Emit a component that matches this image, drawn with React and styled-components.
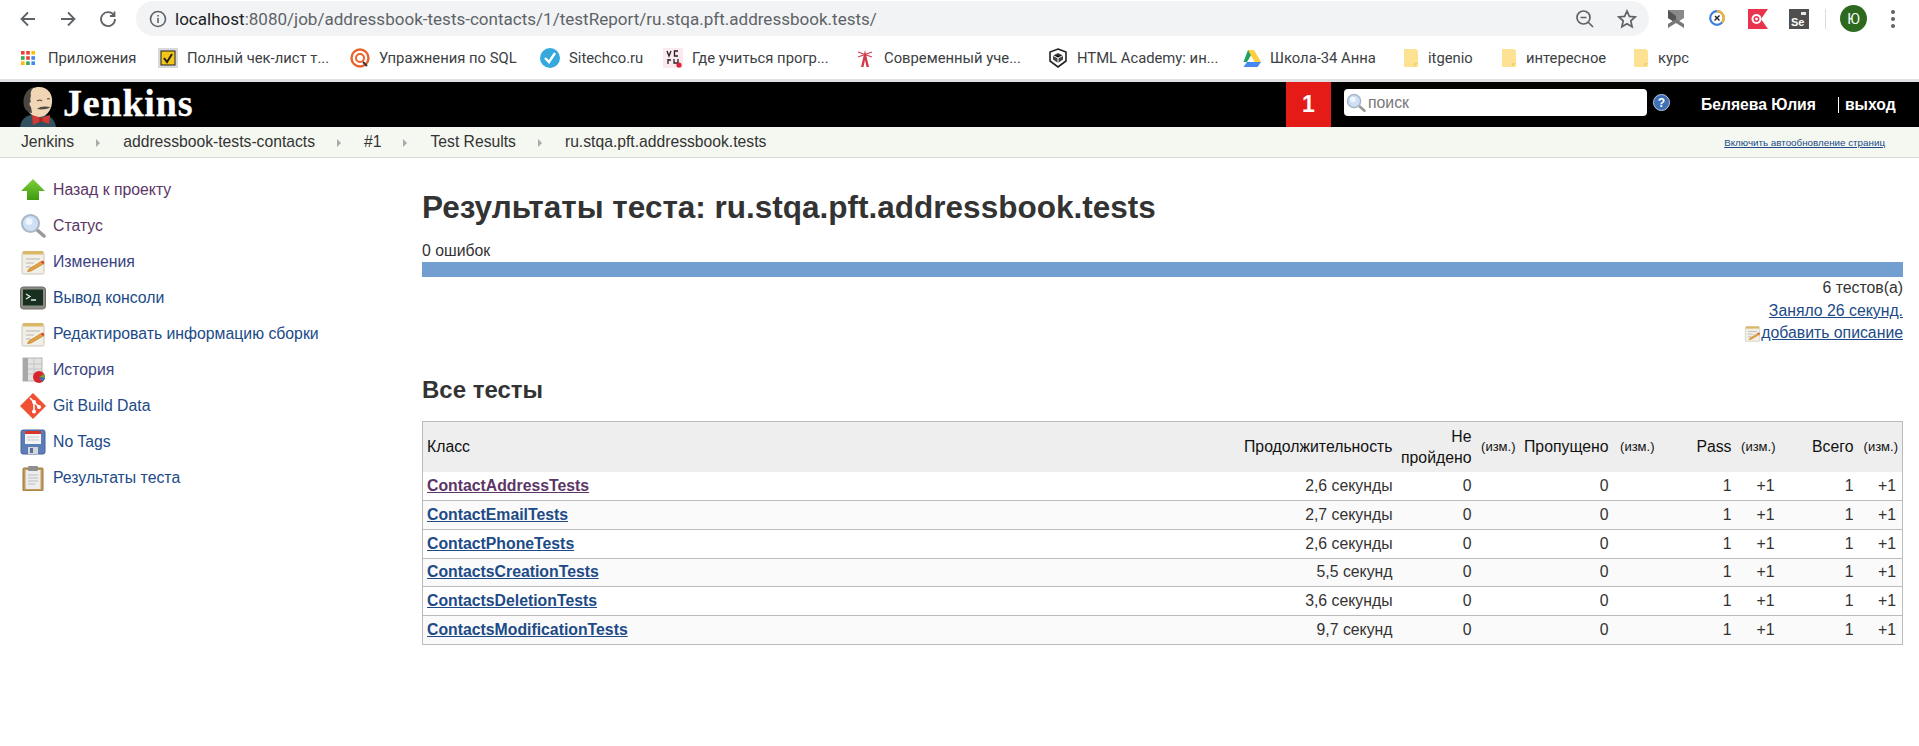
import React from 'react'
import styled, { createGlobalStyle } from 'styled-components'

const GlobalStyle = createGlobalStyle`
  html, body {
    margin: 0;
    padding: 0;
    background: #fff;
    font-family: 'Liberation Sans', Arial, sans-serif;
    color: #333;
  }
  * { box-sizing: border-box; }
`

const Page = styled.div`
  width: 1919px;
  height: 746px;
  overflow: hidden;
  background: #fff;
`

/* browser chrome */
const Toolbar = styled.div`
  display: flex;
  align-items: center;
  height: 37px;
  padding: 0 0 0 18px;
`
const NavIcon = styled.svg`
  width: 20px;
  height: 20px;
  flex: none;
  margin-right: 20px;
  fill: none;
  stroke: #5f6368;
  stroke-width: 1.8;
`
const Omnibox = styled.div`
  display: flex;
  align-items: center;
  flex: none;
  width: 1513px;
  height: 35px;
  margin-left: -2px;
  padding: 0 12px 0 13px;
  border-radius: 18px;
  background: #f1f3f4;
  font-family: 'Roboto', sans-serif;
  font-size: 17.05px;
  color: #5f6368;
`
const UrlHost = styled.span`
  color: #202124;
  margin-left: 8px;
`
const Fill = styled.div`
  flex-grow: 1;
`
const OmniIcon = styled.svg`
  width: 20px;
  height: 20px;
  margin-left: 22px;
  fill: none;
  stroke: #5f6368;
  stroke-width: 1.7;
`
const Extensions = styled.div`
  display: flex;
  align-items: center;
  flex-grow: 1;
  padding-left: 17px;
  gap: 21px;
`
const ExtIcon = styled.svg`
  width: 20px;
  height: 20px;
  flex: none;
`
const Separator = styled.div`
  width: 1px;
  height: 20px;
  background: #dadce0;
  margin-left: -5px;
`
const Avatar = styled.div`
  display: flex;
  align-items: center;
  justify-content: center;
  flex: none;
  width: 27px;
  height: 27px;
  margin-left: -7px;
  border-radius: 50%;
  background: #2d6a1f;
  color: #fff;
  font-family: 'Roboto', sans-serif;
  font-size: 14px;
`
const Dots = styled.div`
  display: flex;
  flex-flow: column;
  gap: 3px;
  margin-left: 3px;
  i {
    display: block;
    width: 4px;
    height: 4px;
    border-radius: 50%;
    background: #5f6368;
  }
`
const Bookmarks = styled.div`
  display: flex;
  align-items: center;
  height: 45px;
  padding: 0 0 0 20px;
  border-bottom: 3px solid #dfe1e5;
  font-family: 'Roboto', sans-serif;
  font-size: 14.8px;
  color: #3c4043;
`
const Bookmark = styled.div`
  display: flex;
  align-items: center;
  width: ${(p) => p.$w}px;
  flex: none;
  white-space: nowrap;
  gap: ${(p) => p.$gap || 9}px;
  svg { flex: none; }
`

/* jenkins header */
const Header = styled.div`
  display: flex;
  align-items: stretch;
  height: 45px;
  background: #000;
`
const Logo = styled.div`
  display: flex;
  align-items: flex-end;
  flex: none;
  width: 1286px;
  padding-left: 17px;
  overflow: hidden;
`
const LogoText = styled.span`
  align-self: center;
  margin-top: -3px;
  color: #fff;
  font-family: 'Liberation Serif', serif;
  font-weight: 700;
  font-size: 38px;
  letter-spacing: 0.8px;
  -webkit-text-stroke: 0.3px #fff;
`
const Badge = styled.div`
  display: flex;
  align-items: center;
  justify-content: center;
  flex: none;
  width: 45px;
  background: #e41b17;
  color: #fff;
  font-weight: 700;
  font-size: 23px;
`
const Search = styled.div`
  display: flex;
  align-items: center;
  flex: none;
  width: 303px;
  height: 27px;
  margin: 7px 0 0 13px;
  padding-left: 2px;
  border-radius: 4px;
  background: #fff;
  color: #777;
  font-size: 15.8px;
  gap: 2px;
`
const Help = styled.div`
  display: flex;
  align-items: center;
  justify-content: center;
  flex: none;
  width: 17px;
  height: 17px;
  margin: 12px 0 0 6px;
  border-radius: 50%;
  background: #3f6fb5;
  border: 1px solid #b9cbe6;
  color: #fff;
  font-size: 12px;
  font-weight: 700;
`
const UserName = styled.div`
  display: flex;
  align-items: center;
  margin-left: 31px;
  color: #fff;
  font-weight: 700;
  font-size: 15.7px;
  white-space: nowrap;
`
const Logout = styled(UserName)`
  margin-left: 22px;
  span {
    border-left: 1px solid #fff;
    padding-left: 6px;
    line-height: 16px;
  }
`

/* breadcrumbs */
const Crumbs = styled.div`
  display: flex;
  align-items: center;
  height: 31px;
  padding: 0 34px 0 21px;
  background: #f5f8f1;
  border-bottom: 1px solid #d8d8d8;
  font-size: 15.7px;
  color: #333;
`
const Arrow = styled.span`
  width: 0;
  height: 0;
  margin: 1px 23px 0 22px;
  border-left: 4px solid #aaa;
  border-top: 4px solid transparent;
  border-bottom: 4px solid transparent;
`
const AutoRefresh = styled.a`
  margin-left: auto;
  font-size: 9.8px;
  color: #204a87;
  text-decoration: underline;
`

const Main = styled.div`
  display: flex;
  align-items: flex-start;
`

/* side panel */
const Side = styled.div`
  flex: none;
  width: 422px;
  padding: 14px 0 0 20px;
`
const taskColors = { visited: '#5c3566', mixed: '#3a3f80', link: '#204a87' }
const TaskRow = styled.div`
  display: flex;
  align-items: center;
  height: 36px;
  font-size: 15.8px;
  color: ${(p) => taskColors[p.$tone || 'link']};
  gap: 7px;
`
const TaskIcon = styled.svg`
  width: 26px;
  height: 26px;
  flex: none;
`

/* content */
const Content = styled.div`
  flex: none;
  width: 1481px;
  font-size: 15.8px;
`
const Title = styled.h1`
  margin: 30px 0 0;
  font-size: 31.5px;
  line-height: 38px;
  font-weight: 700;
  color: #333;
`
const ErrorCount = styled.div`
  margin-top: 14px;
  padding-bottom: 1px;
  line-height: 21px;
`
const ProgressBar = styled.div`
  height: 15px;
  background: #729fcf;
`
const Summary = styled.div`
  display: flex;
  flex-flow: column;
  align-items: flex-end;
`
const SummaryLine = styled.div`
  display: flex;
  align-items: center;
  height: 22.5px;
`
const Link = styled.a`
  color: #204a87;
  text-decoration: underline;
`
const Section = styled.h2`
  margin: 31px 0 0;
  font-size: 24px;
  line-height: 28px;
  font-weight: 700;
  color: #333;
`
const Table = styled.table`
  width: 100%;
  margin-top: 17px;
  border-collapse: collapse;
  table-layout: fixed;
  border: 1px solid #bbb;
`
const HeadCell = styled.th`
  height: 51px;
  padding: 0 4px;
  background: #eee;
  font-weight: 400;
  font-size: ${(p) => (p.$small ? '13px' : '15.8px')};
  line-height: 21px;
  color: #111;
  text-align: ${(p) => (p.$left ? 'left' : 'right')};
`
const Row = styled.tr`
  background: ${(p) => (p.$odd ? '#fafafa' : '#fff')};
  border-bottom: 1px solid #bbb;
`
const Cell = styled.td`
  height: 28.7px;
  padding: 0 ${(p) => p.$pr || 4}px 0 4px;
  text-align: right;
  color: #333;
`
const ClassCell = styled.td`
  padding: 0 4px;
  font-weight: 700;
  a {
    color: ${(p) => (p.$visited ? '#5c3566' : '#204a87')};
    text-decoration: underline;
  }
`

function Magnifier({ size = 26 }) {
  return (
    <svg width={size} height={size} viewBox="0 0 26 26">
      <line x1="16" y1="16" x2="24" y2="23" stroke="#999" strokeWidth="3.5" strokeLinecap="round" />
      <circle cx="10.5" cy="10.5" r="8.5" fill="#cfe0f5" stroke="#a9b8c9" strokeWidth="2" />
      <circle cx="9" cy="8.5" r="3.5" fill="#f0f6ff" />
    </svg>
  )
}

function Notepad({ small }) {
  return (
    <>
      <rect x="2" y="3" width="22" height="22" rx="1.5" fill="#f1efe6" stroke="#c9c6b8" />
      <rect x="3" y="2" width="20" height="3.5" fill="#d9b867" />
      <path d="M6 10h14M6 14h8M6 18h5" stroke="#b5b5b0" strokeWidth="1.2" />
      <path d="M9 20l13-8 2 2.5-13 7.5-3.5.6z" fill="#e8a33d" stroke="#a86e1e" strokeWidth={small ? 0.4 : 0.6} />
      <path d="M21 12.6l2-1.2 1.4 2.3-2 1.2z" fill="#d8423a" />
    </>
  )
}

function TaskGlyph({ kind }) {
  switch (kind) {
    case 'up':
      return (
        <TaskIcon viewBox="0 0 26 26">
          <defs>
            <linearGradient id="upFill" x1="0" y1="0" x2="0" y2="1">
              <stop offset="0" stopColor="#7fcf3a" />
              <stop offset="1" stopColor="#3f9a10" />
            </linearGradient>
          </defs>
          <path d="M13 2L25 14h-6v9H7v-9H1z" fill="url(#upFill)" />
        </TaskIcon>
      )
    case 'search':
      return <Magnifier />
    case 'edit':
      return (
        <TaskIcon viewBox="0 0 26 26">
          <Notepad />
        </TaskIcon>
      )
    case 'console':
      return (
        <TaskIcon viewBox="0 0 26 26">
          <rect x="0.5" y="2" width="25" height="22" rx="3" fill="#8b8d85" stroke="#6b6d66" />
          <rect x="3" y="4.5" width="20" height="16" fill="#17301f" />
          <path d="M6 9l4 2.5L6 14M11 15h5" fill="none" stroke="#e8efe8" strokeWidth="1.3" />
        </TaskIcon>
      )
    case 'history':
      return (
        <TaskIcon viewBox="0 0 26 26">
          <rect x="3" y="1" width="19" height="23" fill="#e2e2e0" stroke="#b5b5b5" />
          <rect x="3" y="1" width="5" height="23" fill="#a8a8a8" />
          <path d="M8 7h14M8 12h14M8 17h14M14 1v23" stroke="#c4c4c4" />
          <circle cx="19" cy="20" r="6" fill="#d8242a" />
          <path d="M19 20l5-3a6 6 0 0 1 1 4z" fill="#6da42d" />
          <path d="M19 20l6 1a6 6 0 0 1-3 4z" fill="#3d71b5" />
        </TaskIcon>
      )
    case 'git':
      return (
        <TaskIcon viewBox="0 0 26 26">
          <path d="M13 0L26 13 13 26 0 13z" fill="#f05033" />
          <path d="M10 5l4 4M14 9v9M14 9l5 5" stroke="#fff" strokeWidth="1.6" fill="none" />
          <circle cx="14" cy="9" r="2" fill="#fff" />
          <circle cx="14" cy="18.5" r="2" fill="#fff" />
          <circle cx="19" cy="14" r="2" fill="#fff" />
        </TaskIcon>
      )
    case 'save':
      return (
        <TaskIcon viewBox="0 0 26 26">
          <rect x="1" y="1" width="24" height="24" rx="2" fill="#5b7db8" stroke="#46639a" />
          <rect x="5" y="2" width="16" height="13" fill="#f4f4f4" />
          <rect x="5" y="2" width="16" height="3" fill="#d8352c" />
          <path d="M7 8h12M7 11h12" stroke="#c8c8c8" />
          <rect x="8" y="18" width="10" height="7" fill="#d6d6d6" />
          <rect x="10" y="19" width="3" height="5" fill="#56709f" />
        </TaskIcon>
      )
    default:
      return (
        <TaskIcon viewBox="0 0 26 26">
          <rect x="3" y="3" width="20" height="23" rx="1" fill="#c19a5b" stroke="#9a7638" />
          <rect x="5.5" y="5" width="15" height="19" fill="#ededed" />
          <rect x="8" y="1" width="10" height="5" rx="1" fill="#8f8f8f" />
          <path d="M8 10h10M8 13h10M8 16h10M8 19h7" stroke="#bdbdbd" />
        </TaskIcon>
      )
  }
}

function AppsIcon() {
  const colors = ['#ea4335', '#ea4335', '#fbbc04', '#34a853', '#ea4335', '#4285f4', '#fbbc04', '#34a853', '#4285f4']
  return (
    <svg width="16" height="16" viewBox="0 0 16 16">
      {colors.map((c, i) => (
        <rect key={i} x={1 + (i % 3) * 5.2} y={1 + Math.floor(i / 3) * 5.2} width="3.6" height="3.6" fill={c} />
      ))}
    </svg>
  )
}

function FolderIcon() {
  return (
    <svg width="16" height="20" viewBox="0 0 16 20">
      <path d="M1 1h12l2 2v15a1 1 0 0 1-1 1H2a1 1 0 0 1-1-1z" fill="#fde293" />
      <path d="M11 19v-4h4z" fill="#f5cf68" />
    </svg>
  )
}

function BookmarkIcon({ kind }) {
  switch (kind) {
    case 'apps':
      return <AppsIcon />
    case 'check':
      return (
        <svg width="20" height="20" viewBox="0 0 20 20">
          <rect width="20" height="20" fill="#d9d9d9" />
          <rect x="3" y="3" width="14" height="14" fill="#f5c518" stroke="#222" />
          <path d="M6 10l3 4 5-8" fill="none" stroke="#222" strokeWidth="2" />
        </svg>
      )
    case 'sql':
      return (
        <svg width="20" height="20" viewBox="0 0 20 20">
          <circle cx="10" cy="10" r="8.5" fill="none" stroke="#e8622c" strokeWidth="2.4" />
          <circle cx="10" cy="10" r="4" fill="none" stroke="#e8622c" strokeWidth="2" />
          <path d="M13 14l4 4" stroke="#333" strokeWidth="2" />
        </svg>
      )
    case 'sitechco':
      return (
        <svg width="20" height="20" viewBox="0 0 20 20">
          <circle cx="10" cy="10" r="10" fill="#35a9dd" />
          <path d="M5 10l4 4 6-9" fill="none" stroke="#fff" strokeWidth="2.4" />
        </svg>
      )
    case 'vc':
      return (
        <svg width="20" height="20" viewBox="0 0 20 20">
          <rect width="20" height="20" fill="#fce9ee" />
          <path d="M4 3l2 5 2-5M15 3h-3.5v5H15M5 11v5M5 12h3M11 11v4h4v-4" fill="none" stroke="#222" strokeWidth="1.3" />
          <circle cx="16" cy="17" r="2.6" fill="#e01e3c" />
        </svg>
      )
    case 'tower':
      return (
        <svg width="20" height="20" viewBox="0 0 20 20">
          <path d="M10 2L6 19h2.5L10 12l1.5 7H14z" fill="#cf3c4b" />
          <path d="M3 4l14 5M17 4L3 9" stroke="#cf3c4b" strokeWidth="1.2" />
        </svg>
      )
    case 'shield':
      return (
        <svg width="20" height="20" viewBox="0 0 20 20">
          <path d="M10 1l8 3v9l-8 6-8-6V4z" fill="#fff" stroke="#222" strokeWidth="1.6" />
          <path d="M10 5l5 2.5v4L10 15l-5-3.5v-4z" fill="#444" />
          <path d="M5 7.5L10 10l5-2.5M10 10v5" stroke="#fff" />
        </svg>
      )
    case 'drive':
      return (
        <svg width="20" height="20" viewBox="0 0 20 20">
          <path d="M7 2h6l-7 12-3.5-.1z" fill="#1ea362" />
          <path d="M7 2h6l7 12h-6.5z" fill="#ffcf3f" />
          <path d="M6 14h14l-3.5 5H2.500z" fill="#4688f1" />
        </svg>
      )
    default:
      return <FolderIcon />
  }
}

function JenkinsLogo() {
  return (
    <svg width="46" height="45" viewBox="0 0 46 45">
      <path d="M3 45c1-7 5-11 11-12h14c6 1 10 5 11 12z" fill="#335061" />
      <path d="M8 22C6 11 14 5 22 5c9 0 14 7 13 16-1 8-6 14-13 14-7 0-12-5-14-13z" fill="#f0d6b5" />
      <path d="M8 27C4 18 8 7 17 5c-3 3-4 6-3 9-1 2-1 4 0 6-2 0-2 3 0 5l1 6c-3 0-5-2-7-4z" fill="#4a4642" />
      <path d="M20 19c2-1 4-1 5 0M30 17c1-.500 2-.500 3 0" stroke="#6b5a48" strokeWidth="1.2" fill="none" />
      <path d="M20 27c3-3 9-3 13-2-1 2-8 3-13 2z" fill="#4f4a45" />
      <path d="M15 33l9 3 9-3-1 9-8-3-8 4z" fill="#d33833" />
      <circle cx="24" cy="38" r="2" fill="#a82622" />
    </svg>
  )
}

const bookmarks = [
  { kind: 'apps', label: 'Приложения', w: 138, gap: 12 },
  { kind: 'check', label: 'Полный чек-лист т...', w: 192 },
  { kind: 'sql', label: 'Упражнения по SQL', w: 190 },
  { kind: 'sitechco', label: 'Sitechco.ru', w: 123 },
  { kind: 'vc', label: 'Где учиться прогр...', w: 192 },
  { kind: 'tower', label: 'Современный уче...', w: 193 },
  { kind: 'shield', label: 'HTML Academy: ин...', w: 193 },
  { kind: 'drive', label: 'Школа-34 Анна', w: 162 },
  { kind: 'folder', label: 'itgenio', w: 98 },
  { kind: 'folder', label: 'интересное', w: 132 },
  { kind: 'folder', label: 'курс', w: 70 },
]

const tasks = [
  { kind: 'up', label: 'Назад к проекту', tone: 'visited' },
  { kind: 'search', label: 'Статус', tone: 'visited' },
  { kind: 'edit', label: 'Изменения', tone: 'mixed' },
  { kind: 'console', label: 'Вывод консоли' },
  { kind: 'edit', label: 'Редактировать информацию сборки' },
  { kind: 'history', label: 'История', tone: 'mixed' },
  { kind: 'git', label: 'Git Build Data' },
  { kind: 'save', label: 'No Tags' },
  { kind: 'clipboard', label: 'Результаты теста' },
]

const crumbs = ['Jenkins', 'addressbook-tests-contacts', '#1', 'Test Results', 'ru.stqa.pft.addressbook.tests']

const rows = [
  { name: 'ContactAddressTests', time: '2,6 секунды', visited: true },
  { name: 'ContactEmailTests', time: '2,7 секунды' },
  { name: 'ContactPhoneTests', time: '2,6 секунды' },
  { name: 'ContactsCreationTests', time: '5,5 секунд' },
  { name: 'ContactsDeletionTests', time: '3,6 секунды' },
  { name: 'ContactsModificationTests', time: '9,7 секунд' },
]

export default function App() {
  return (
    <Page>
      <GlobalStyle />
      <Toolbar>
        <NavIcon viewBox="0 0 20 20">
          <path d="M17 10H4M10 3.500L3.500 10l6.500 6.500" />
        </NavIcon>
        <NavIcon viewBox="0 0 20 20">
          <path d="M3 10h13M10 3.500l6.500 6.500-6.500 6.500" />
        </NavIcon>
        <NavIcon viewBox="0 0 20 20">
          <path d="M16 6.500A7 7 0 1 0 17 10M16.500 2.500v4.500H12" />
        </NavIcon>
        <Omnibox>
          <svg width="18" height="18" viewBox="0 0 18 18" fill="none" stroke="#5f6368" strokeWidth="1.6">
            <circle cx="9" cy="9" r="7.5" />
            <path d="M9 8v5M9 5v1.600" />
          </svg>
          <UrlHost>localhost</UrlHost>:8080/job/addressbook-tests-contacts/1/testReport/ru.stqa.pft.addressbook.tests/
          <Fill />
          <OmniIcon viewBox="0 0 20 20">
            <circle cx="8.500" cy="8.500" r="6.500" />
            <path d="M13.500 13.500L18 18M5.500 8.500h6" />
          </OmniIcon>
          <OmniIcon viewBox="0 0 20 20">
            <path d="M10 2l2.400 5.400 5.800.6-4.400 3.900 1.300 5.800L10 14.700l-5.100 3 1.300-5.800L1.800 8l5.800-.6z" />
          </OmniIcon>
        </Omnibox>
        <Extensions>
          <ExtIcon viewBox="0 0 20 20">
            <path d="M2 1h16v8l-8 5-8-5z" fill="#8a8a8a" />
            <path d="M2 1l8 6v7L2 9z" fill="#555" />
            <path d="M2 15l8-5 8 5v4l-8-5-8 5z" fill="#777" />
          </ExtIcon>
          <ExtIcon viewBox="0 0 20 20">
            <circle cx="10" cy="9" r="6.800" fill="#fff" stroke="#3f7fd9" strokeWidth="2.200" />
            <path d="M10 2.200a6.800 6.800 0 0 1 5 11.400" fill="none" stroke="#f2b632" strokeWidth="2.200" />
            <path d="M7.500 11.500l5-5M8 7l4.500 4.500" stroke="#222" strokeWidth="1.400" />
          </ExtIcon>
          <ExtIcon viewBox="0 0 20 20">
            <path d="M0 0h20l-7 10 7 10H0z" fill="#e8344e" />
            <circle cx="8.500" cy="10" r="5" fill="#fff" />
            <circle cx="8.500" cy="10" r="2.200" fill="none" stroke="#e8344e" strokeWidth="1.500" />
          </ExtIcon>
          <ExtIcon viewBox="0 0 20 20">
            <rect width="20" height="20" fill="#4f4f4f" />
            <rect x="12" y="3" width="5" height="3" fill="#e8e8e8" />
            <text x="2" y="17" fill="#fff" fontSize="11" fontWeight="700" fontFamily="Liberation Sans">Se</text>
          </ExtIcon>
          <Separator />
          <Avatar>Ю</Avatar>
          <Dots>
            <i />
            <i />
            <i />
          </Dots>
        </Extensions>
      </Toolbar>
      <Bookmarks>
        {bookmarks.map((b) => (
          <Bookmark key={b.label} $w={b.w} $gap={b.gap}>
            <BookmarkIcon kind={b.kind} />
            {b.label}
          </Bookmark>
        ))}
      </Bookmarks>
      <Header>
        <Logo>
          <JenkinsLogo />
          <LogoText>Jenkins</LogoText>
        </Logo>
        <Badge>1</Badge>
        <Search>
          <Magnifier size={20} />
          поиск
        </Search>
        <Help>?</Help>
        <UserName>Беляева Юлия</UserName>
        <Logout>
          <span>выход</span>
        </Logout>
      </Header>
      <Crumbs>
        {crumbs.map((c, i) => (
          <React.Fragment key={c}>
            {i > 0 && <Arrow />}
            <span>{c}</span>
          </React.Fragment>
        ))}
        <AutoRefresh>Включить автообновление страниц</AutoRefresh>
      </Crumbs>
      <Main>
        <Side>
          {tasks.map((t) => (
            <TaskRow key={t.label + t.kind} $tone={t.tone}>
              <TaskGlyph kind={t.kind} />
              {t.label}
            </TaskRow>
          ))}
        </Side>
        <Content>
          <Title>Результаты теста: ru.stqa.pft.addressbook.tests</Title>
          <ErrorCount>0 ошибок</ErrorCount>
          <ProgressBar />
          <Summary>
            <SummaryLine>6 тестов(а)</SummaryLine>
            <SummaryLine>
              <Link>Заняло 26 секунд.</Link>
            </SummaryLine>
            <SummaryLine>
              <svg width="17" height="17" viewBox="0 0 26 26">
                <Notepad small />
              </svg>
              <Link>добавить описание</Link>
            </SummaryLine>
          </Summary>
          <Section>Все тесты</Section>
          <Table>
            <colgroup>
              <col />
              <col style={{ width: 170 }} />
              <col style={{ width: 79 }} />
              <col style={{ width: 44 }} />
              <col style={{ width: 93 }} />
              <col style={{ width: 46 }} />
              <col style={{ width: 77 }} />
              <col style={{ width: 44 }} />
              <col style={{ width: 78 }} />
              <col style={{ width: 45 }} />
            </colgroup>
            <thead>
              <tr>
                <HeadCell $left>Класс</HeadCell>
                <HeadCell>Продолжительность</HeadCell>
                <HeadCell>Не пройдено</HeadCell>
                <HeadCell $small>(изм.)</HeadCell>
                <HeadCell>Пропущено</HeadCell>
                <HeadCell $small>(изм.)</HeadCell>
                <HeadCell>Pass</HeadCell>
                <HeadCell $small>(изм.)</HeadCell>
                <HeadCell>Всего</HeadCell>
                <HeadCell $small>(изм.)</HeadCell>
              </tr>
            </thead>
            <tbody>
              {rows.map((r, i) => (
                <Row key={r.name} $odd={i % 2 === 1}>
                  <ClassCell $visited={r.visited}>
                    <a>{r.name}</a>
                  </ClassCell>
                  <Cell>{r.time}</Cell>
                  <Cell>0</Cell>
                  <Cell />
                  <Cell>0</Cell>
                  <Cell />
                  <Cell>1</Cell>
                  <Cell $pr={5}>+1</Cell>
                  <Cell>1</Cell>
                  <Cell $pr={6}>+1</Cell>
                </Row>
              ))}
            </tbody>
          </Table>
        </Content>
      </Main>
    </Page>
  )
}
